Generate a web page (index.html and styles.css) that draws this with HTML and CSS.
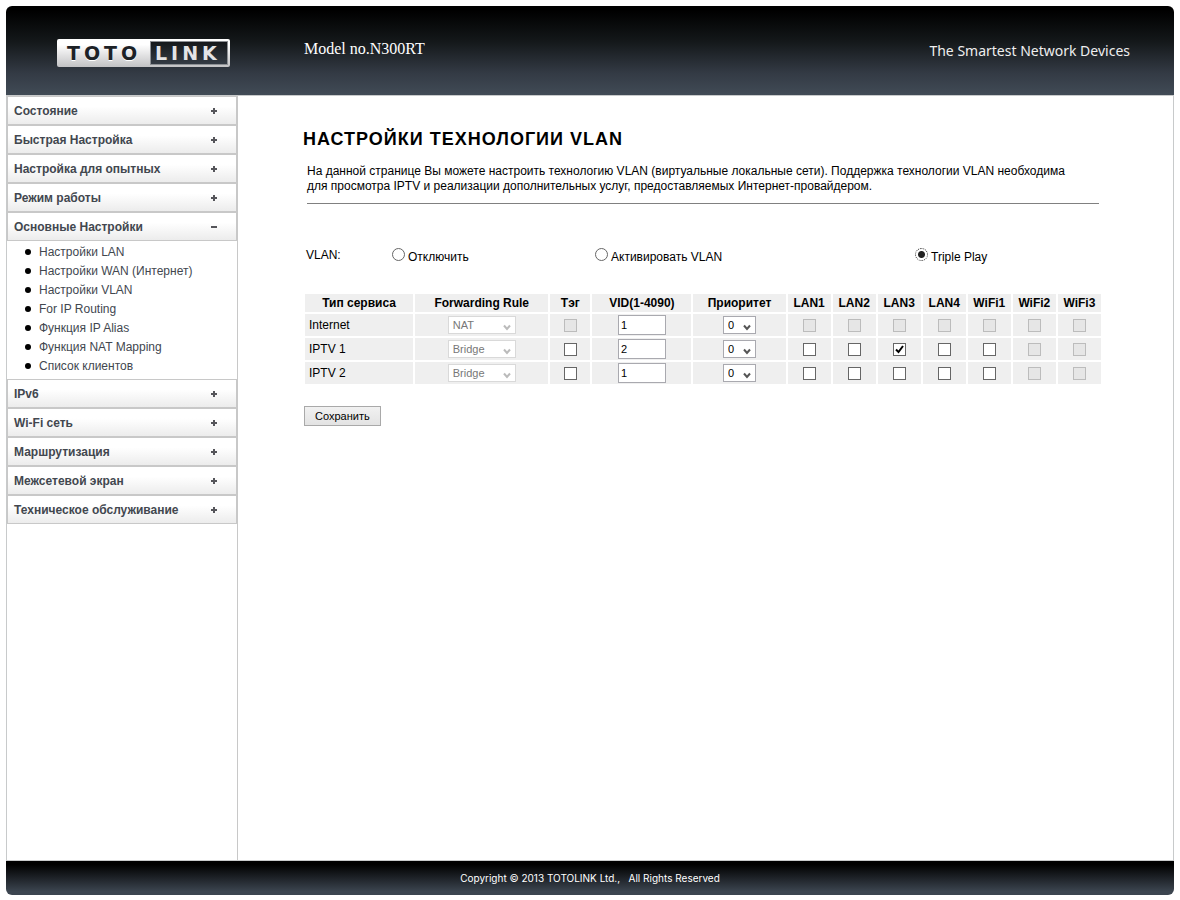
FILE: index.html
```
<!DOCTYPE html>
<html lang="ru">
<head>
<meta charset="UTF-8">
<meta name="viewport" content="width=device-width, initial-scale=1.0">
<title>TOTOLINK N300RT</title>
<link rel="stylesheet" href="styles.css">
</head>
<body>
<header class="header">
    <svg class="logo" width="174" height="29" viewBox="0 0 174 29" role="img" aria-label="TOTOLINK">
        <defs>
            <linearGradient id="plate" x1="0" y1="0" x2="0" y2="1">
                <stop offset="0.2" stop-color="#fff"/>
                <stop offset="1" stop-color="#c2c2c4"/>
            </linearGradient>
            <linearGradient id="dark" x1="0" y1="0" x2="0" y2="1">
                <stop offset="0" stop-color="#15181b"/>
                <stop offset="1" stop-color="#343b44"/>
            </linearGradient>
        </defs>
        <rect x="0" y="0" width="173" height="28" rx="2" fill="url(#plate)"/>
        <rect x="93" y="2" width="78" height="24" fill="#8d9094"/>
        <rect x="94" y="3" width="76" height="22" fill="url(#dark)"/>
        <text class="logo-text" x="10" y="22" fill="#fff">TOTO</text>
        <text class="logo-text" x="10" y="21" fill="#1c2126">TOTO</text>
        <text class="logo-text" x="98" y="21" fill="#e4e4e6">LINK</text>
    </svg>
    <span class="model">Model no.N300RT</span>
    <span class="slogan">The Smartest Network Devices</span>
</header>

<div class="container">
    <nav class="menu">
        <button type="button" class="menu-item">Состояние<span class="sign plus"></span></button>
        <button type="button" class="menu-item">Быстрая Настройка<span class="sign plus"></span></button>
        <button type="button" class="menu-item">Настройка для опытных<span class="sign plus"></span></button>
        <button type="button" class="menu-item">Режим работы<span class="sign plus"></span></button>
        <button type="button" class="menu-item">Основные Настройки<span class="sign"></span></button>
        <ul class="submenu">
            <li><a href="#">Настройки LAN</a></li>
            <li><a href="#">Настройки WAN (Интернет)</a></li>
            <li><a href="#">Настройки VLAN</a></li>
            <li><a href="#">For IP Routing</a></li>
            <li><a href="#">Функция IP Alias</a></li>
            <li><a href="#">Функция NAT Mapping</a></li>
            <li><a href="#">Список клиентов</a></li>
        </ul>
        <button type="button" class="menu-item">IPv6<span class="sign plus"></span></button>
        <button type="button" class="menu-item">Wi-Fi сеть<span class="sign plus"></span></button>
        <button type="button" class="menu-item">Маршрутизация<span class="sign plus"></span></button>
        <button type="button" class="menu-item">Межсетевой экран<span class="sign plus"></span></button>
        <button type="button" class="menu-item">Техническое обслуживание<span class="sign plus"></span></button>
    </nav>

    <main class="content">
        <h2>НАСТРОЙКИ ТЕХНОЛОГИИ VLAN</h2>
        <p class="intro">На данной странице Вы можете настроить технологию VLAN (виртуальные локальные сети). Поддержка технологии VLAN необходима для просмотра IPTV и реализации дополнительных услуг, предоставляемых Интернет-провайдером.</p>

        <form id="vlanForm">
            <div class="mode" role="radiogroup" aria-labelledby="modeTitle">
                <span id="modeTitle">VLAN:</span>
                <label><input type="radio" name="mode" value="0">Отключить</label>
                <label><input type="radio" name="mode" value="1">Активировать VLAN</label>
                <label><input type="radio" name="mode" value="2" class="focused" checked>Triple Play</label>
            </div>

            <table class="vlan-table">
                <colgroup>
                    <col class="c-type"><col class="c-rule"><col class="c-tag"><col class="c-vid"><col class="c-prio">
                    <col class="c-port"><col class="c-port"><col class="c-port"><col class="c-port">
                    <col class="c-port"><col class="c-port"><col class="c-port">
                </colgroup>
                <thead>
                    <tr>
                        <th>Тип сервиса</th>
                        <th>Forwarding Rule</th>
                        <th>Тэг</th>
                        <th>VID(1-4090)</th>
                        <th>Приоритет</th>
                        <th>LAN1</th>
                        <th>LAN2</th>
                        <th>LAN3</th>
                        <th>LAN4</th>
                        <th>WiFi1</th>
                        <th>WiFi2</th>
                        <th>WiFi3</th>
                    </tr>
                </thead>
                <tbody>
                    <tr>
                        <td>Internet</td>
                        <td><select class="rule" aria-label="Internet Forwarding Rule" disabled><option>NAT</option></select></td>
                        <td><input type="checkbox" aria-label="Internet Тэг" disabled></td>
                        <td><input type="text" value="1" aria-label="Internet VID"></td>
                        <td><select class="prio" aria-label="Internet Приоритет"><option>0</option></select></td>
                        <td><input type="checkbox" aria-label="Internet LAN1" disabled></td>
                        <td><input type="checkbox" aria-label="Internet LAN2" disabled></td>
                        <td><input type="checkbox" aria-label="Internet LAN3" disabled></td>
                        <td><input type="checkbox" aria-label="Internet LAN4" disabled></td>
                        <td><input type="checkbox" aria-label="Internet WiFi1" disabled></td>
                        <td><input type="checkbox" aria-label="Internet WiFi2" disabled></td>
                        <td><input type="checkbox" aria-label="Internet WiFi3" disabled></td>
                    </tr>
                    <tr>
                        <td>IPTV 1</td>
                        <td><select class="rule" aria-label="IPTV 1 Forwarding Rule" disabled><option>Bridge</option></select></td>
                        <td><input type="checkbox" aria-label="IPTV 1 Тэг"></td>
                        <td><input type="text" value="2" aria-label="IPTV 1 VID"></td>
                        <td><select class="prio" aria-label="IPTV 1 Приоритет"><option>0</option></select></td>
                        <td><input type="checkbox" aria-label="IPTV 1 LAN1"></td>
                        <td><input type="checkbox" aria-label="IPTV 1 LAN2"></td>
                        <td><input type="checkbox" aria-label="IPTV 1 LAN3" checked></td>
                        <td><input type="checkbox" aria-label="IPTV 1 LAN4"></td>
                        <td><input type="checkbox" aria-label="IPTV 1 WiFi1"></td>
                        <td><input type="checkbox" aria-label="IPTV 1 WiFi2" disabled></td>
                        <td><input type="checkbox" aria-label="IPTV 1 WiFi3" disabled></td>
                    </tr>
                    <tr>
                        <td>IPTV 2</td>
                        <td><select class="rule" aria-label="IPTV 2 Forwarding Rule" disabled><option>Bridge</option></select></td>
                        <td><input type="checkbox" aria-label="IPTV 2 Тэг"></td>
                        <td><input type="text" value="1" aria-label="IPTV 2 VID"></td>
                        <td><select class="prio" aria-label="IPTV 2 Приоритет"><option>0</option></select></td>
                        <td><input type="checkbox" aria-label="IPTV 2 LAN1"></td>
                        <td><input type="checkbox" aria-label="IPTV 2 LAN2"></td>
                        <td><input type="checkbox" aria-label="IPTV 2 LAN3"></td>
                        <td><input type="checkbox" aria-label="IPTV 2 LAN4"></td>
                        <td><input type="checkbox" aria-label="IPTV 2 WiFi1"></td>
                        <td><input type="checkbox" aria-label="IPTV 2 WiFi2" disabled></td>
                        <td><input type="checkbox" aria-label="IPTV 2 WiFi3" disabled></td>
                    </tr>
                </tbody>
            </table>
            <button type="submit" class="save">Сохранить</button>
        </form>
    </main>
</div>

<footer class="footer">Copyright © 2013 TOTOLINK Ltd., &nbsp; All Rights Reserved</footer>
</body>
</html>
```
FILE: styles.css
```
* {
    box-sizing: border-box;
}
body {
    display: flex;
    flex-direction: column;
    min-height: 100vh;
    margin: 0;
    padding: 6px 6px 5px;
    background: #fff;
    color: #000;
    font-family: "Liberation Sans", Arial, sans-serif;
    font-size: 12px;
}
.header {
    display: flex;
    align-items: flex-start;
    padding: 33px 44px 27px 51px;
    background: linear-gradient(#000 5%, #14181a 40%, #333a44 75%, #414b56);
    border-radius: 6px 6px 0 0;
    color: #fff;
}
.logo {
    flex: none;
    margin-right: 73px;
}
.logo-text {
    font-family: "DejaVu Sans", sans-serif;
    font-weight: bold;
    font-size: 19px;
    letter-spacing: 4px;
}
.model {
    font-family: "Liberation Serif", "Times New Roman", serif;
    font-size: 16px;
    line-height: 20px;
}
.slogan {
    margin-left: auto;
    font-family: "Noto Sans", sans-serif;
    font-size: 14px;
    line-height: 24px;
    color: #eee;
}
.container {
    display: flex;
    flex: 1;
    border: 1px solid #c8cacb;
}

/* left menu */
.menu {
    flex: none;
    width: 231px;
    border-right: 1px solid #c8c8c8;
}
.menu-item {
    display: flex;
    justify-content: space-between;
    align-items: center;
    width: 100%;
    height: 29px;
    padding: 0 19px 0 6px;
    border: 1px solid #c8c8c8;
    background: linear-gradient(#fff 35%, #ececec);
    color: #42474f;
    font-family: inherit;
    font-size: 12px;
    font-weight: bold;
    text-align: left;
    cursor: pointer;
}
.sign {
    width: 6px;
    height: 2px;
    background: #55555a;
}
.sign.plus {
    height: 6px;
    background: linear-gradient(#55555a, #55555a) center / 2px 6px no-repeat,
                linear-gradient(#55555a, #55555a) center / 6px 2px no-repeat;
}
.submenu {
    list-style: none;
    margin: 0;
    padding: 1px 0 4px 18px;
}
.submenu li {
    display: flex;
    align-items: center;
    gap: 8px;
    height: 19px;
}
.submenu li::before {
    content: "";
    width: 6px;
    height: 6px;
    border-radius: 50%;
    background: #000;
}
.submenu a {
    color: #42474f;
    text-decoration: none;
}
.submenu a:hover {
    text-decoration: underline;
}

/* page */
.content {
    flex: 1;
    max-width: 865px;
    padding: 32px 0 20px 65px;
}
h2 {
    margin: 0;
    font-size: 18px;
    line-height: 22px;
    letter-spacing: 1px;
}
.intro {
    margin: 14px 4px 44px;
    padding: 0 16px 9px 0;
    border-bottom: 1px solid #808080;
    line-height: 15px;
}
.mode {
    display: grid;
    grid-template-columns: 86px 203px 320px 1fr;
    padding: 0 3px;
    line-height: 14px;
}
.mode label {
    display: flex;
    gap: 3px;
    line-height: 18px;
}
.mode input {
    appearance: none;
    width: 13px;
    height: 13px;
    margin: 0;
    border: 1px solid #666;
    border-radius: 50%;
    background: #fff;
}
.mode input:checked {
    background: radial-gradient(#222 0 3px, #fff 4px);
}
.mode input.focused {
    border: 1px dotted #222;
}
.vlan-table {
    width: 100%;
    margin-top: 26px;
    table-layout: fixed;
    border-collapse: separate;
    border-spacing: 2px;
}
.c-type {
    width: 108px;
}
.c-rule {
    width: 133px;
}
.c-tag {
    width: 40px;
}
.c-vid {
    width: 99px;
}
.c-prio {
    width: 92px;
}
.c-port {
    width: 43px;
}
th, td {
    padding: 0;
    background: #efefef;
    text-align: center;
    vertical-align: middle;
}
th {
    height: 18px;
}
td {
    height: 22px;
}
td:first-child {
    padding-left: 4px;
    text-align: left;
}
td input, td select {
    display: block;
    margin: 0 auto;
    font-family: inherit;
    border: 1px solid #a9a9af;
    background-color: #fff;
    color: #000;
}
td input[type="text"] {
    width: 48px;
    height: 20px;
    padding: 0 2px;
    font-size: 11px;
}
td select {
    appearance: none;
    height: 18px;
    padding: 0 4px;
    border-radius: 0;
    font-size: 11px;
    background-image: url("data:image/svg+xml,%3Csvg xmlns='http://www.w3.org/2000/svg' width='8' height='7'%3E%3Cpath d='M1 1.5 4 5 7 1.5' fill='none' stroke='%23555' stroke-width='2'/%3E%3C/svg%3E");
    background-repeat: no-repeat;
    background-position: right 4px bottom 2px;
}
td select:disabled {
    border-color: #d9d9d9;
    color: #777;
    opacity: 1;
    background-image: url("data:image/svg+xml,%3Csvg xmlns='http://www.w3.org/2000/svg' width='8' height='7'%3E%3Cpath d='M1 1.5 4 5 7 1.5' fill='none' stroke='%23bbb' stroke-width='2'/%3E%3C/svg%3E");
}
.rule {
    width: 68px;
}
.prio {
    width: 33px;
}
td input[type="checkbox"] {
    appearance: none;
    width: 13px;
    height: 13px;
    border-color: #666;
}
td input[type="checkbox"]:checked {
    background: url("data:image/svg+xml,%3Csvg xmlns='http://www.w3.org/2000/svg' width='11' height='11'%3E%3Cpath d='M2 5.5 4.5 8 9 2' fill='none' stroke='%23000' stroke-width='2'/%3E%3C/svg%3E") #fff;
}
td input[type="checkbox"]:disabled {
    border-color: #bcbcbc;
    background: #e6e6e6;
}
.save {
    display: block;
    height: 20px;
    margin: 20px 1px 0;
    padding: 0 10px;
    border: 1px solid #a9a9a9;
    background: linear-gradient(#f1f1f1, #e3e3e3);
    color: #000;
    font-family: inherit;
    font-size: 11px;
}
.footer {
    padding: 10px 0;
    background: linear-gradient(#000 10%, #3c4550 90%);
    border-radius: 0 0 6px 6px;
    color: #fff;
    font-family: Inter, sans-serif;
    font-size: 10px;
    line-height: 14px;
    text-align: center;
}
```
